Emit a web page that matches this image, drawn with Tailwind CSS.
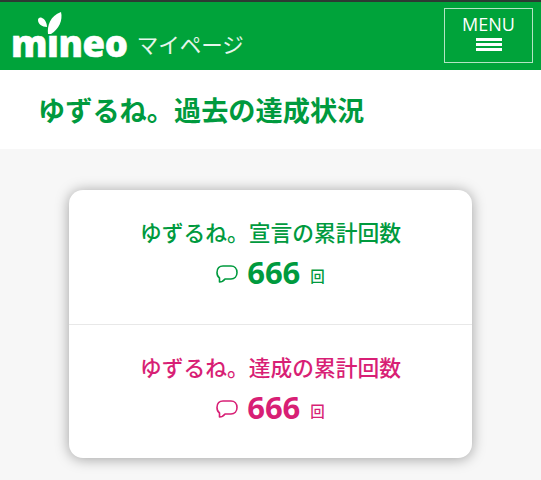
<!DOCTYPE html>
<html lang="ja">
<head>
  <meta charset="UTF-8" />
  <meta name="viewport" content="width=device-width, initial-scale=1.0" />
  <title>ゆずるね。過去の達成状況</title>
  <script src="https://cdn.jsdelivr.net/npm/@tailwindcss/browser@4"></script>
</head>
<body class="bg-[#f7f7f7] h-[480px] overflow-hidden font-['Noto_Sans_CJK_JP','Noto_Sans',sans-serif]">
  <!-- Header -->
  <header class="h-[70px] bg-[#00a33a] border-t-2 border-[#2d3a33] flex items-center justify-between pl-[11px] pr-[8px]">
    <div class="flex items-end mt-[13px]">
      <div class="relative">
        <svg class="absolute left-[26px] top-[-16px] w-[26px] h-[23px]" viewBox="0 0 26 23" fill="#fff">
          <path d="M11 22 C10 14 13 4 24 0 C26 8 22 17 14 22 Z" />
          <path d="M10 15 C5 15 1 12 1 8 C1 6 3 5 5 6 C8 7 10 11 10 15 Z" />
        </svg>
        <span class="block font-['Open_Sans',sans-serif] font-extrabold text-[36.5px] leading-[30px] tracking-[-0.4px] [-webkit-text-stroke:0.5px_white] text-white">mıneo</span>
      </div>
      <span class="ml-[9px] mb-[-1px] text-[21.5px] leading-[30px] text-white/90">マイページ</span>
    </div>
    <div class="w-[89px] h-[55px] mb-[2px] border border-white/70 flex flex-col items-center">
      <span class="font-['Open_Sans',sans-serif] text-[18px] leading-[20px] mt-[5px] text-white">MENU</span>
      <div class="mt-[4px] w-[26px] flex flex-col gap-[2px]">
        <div class="h-[3px] bg-white"></div>
        <div class="h-[3px] bg-white"></div>
        <div class="h-[3px] bg-white"></div>
      </div>
    </div>
  </header>

  <!-- Title -->
  <div class="h-[79px] bg-white flex items-center pl-[38px]">
    <h1 class="text-[27.2px] font-bold leading-none text-[#009a3e]">ゆずるね。過去の達成状況</h1>
  </div>

  <!-- Card -->
  <div class="mt-[41px] mx-[69px] w-[403px] h-[268px] bg-white rounded-[14px] shadow-[0_1px_14px_rgba(0,0,0,0.36)]">
    <div class="h-[135px] border-b border-[#e8e8e8] flex flex-col items-center pt-[26px] text-[#009a3e]">
      <p class="text-[21.75px] font-medium leading-[32px]">ゆずるね。宣言の累計回数</p>
      <div class="flex items-center mt-[5px] h-[38px]">
        <svg class="w-[22px] h-[18px] mr-[9px] mt-[4px]" viewBox="0 0 22 18" fill="none" stroke="currentColor" stroke-width="1.6" stroke-linejoin="round">
          <path d="M3.5 17 L3.5 13 C2 12 1 10 1 7.5 C1 3 3.5 1 7 1 L15 1 C18.5 1 21 3.5 21 7.5 C21 11.5 18.5 14 15 14 L9 14 C7.5 16 5.5 17 3.5 17 Z" />
        </svg>
        <span class="font-['Open_Sans',sans-serif] text-[31px] font-bold leading-none">666</span>
        <span class="ml-[10px] mt-[9px] text-[14.5px] font-medium leading-none">回</span>
      </div>
    </div>
    <div class="h-[133px] flex flex-col items-center pt-[26px] text-[#d81f75]">
      <p class="text-[21.75px] font-medium leading-[32px]">ゆずるね。達成の累計回数</p>
      <div class="flex items-center mt-[5px] h-[38px]">
        <svg class="w-[22px] h-[18px] mr-[9px] mt-[4px]" viewBox="0 0 22 18" fill="none" stroke="currentColor" stroke-width="1.6" stroke-linejoin="round">
          <path d="M3.5 17 L3.5 13 C2 12 1 10 1 7.5 C1 3 3.5 1 7 1 L15 1 C18.5 1 21 3.5 21 7.5 C21 11.5 18.5 14 15 14 L9 14 C7.5 16 5.5 17 3.5 17 Z" />
        </svg>
        <span class="font-['Open_Sans',sans-serif] text-[31px] font-bold leading-none">666</span>
        <span class="ml-[10px] mt-[9px] text-[14.5px] font-medium leading-none">回</span>
      </div>
    </div>
  </div>
</body>
</html>
